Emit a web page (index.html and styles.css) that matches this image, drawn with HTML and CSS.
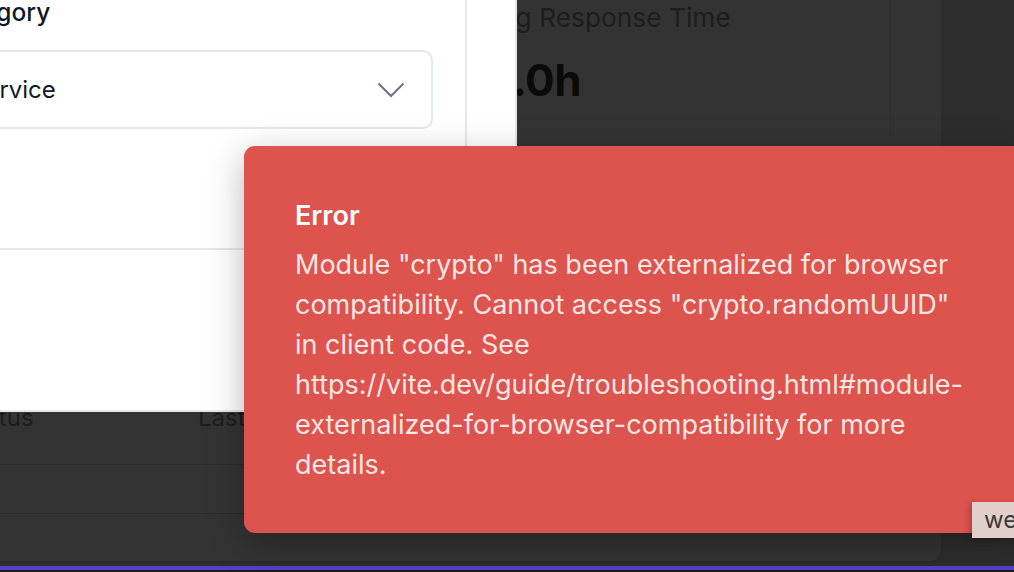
FILE: index.html
```html
<!DOCTYPE html>
<html lang="en">
<head>
<meta charset="utf-8">
<title>Tickets</title>
<link rel="stylesheet" href="styles.css">
</head>
<body>
<div class="page">
  <div class="content">
    <div class="card">
      <div class="stats">
        <div class="stat">
          <div class="stat-label">Avg Response Time</div>
          <div class="stat-value">2.0h</div>
        </div>
        <div class="stat stat-narrow"></div>
      </div>
      <div class="spacer"></div>
      <div class="table">
        <div class="thead">
          <div class="th th-status">Status</div>
          <div class="th">Last Updated</div>
        </div>
        <div class="tr"></div>
        <div class="tr tr-last"></div>
      </div>
    </div>
  </div>
  <div class="accent"></div>
  <div class="footer"></div>
</div>

<div class="modal">
  <div class="modal-body">
    <div class="form">
      <label class="field-label">Category</label>
      <div class="select">
        <span class="select-value">Service</span>
        <svg class="chevron" width="28" height="16" viewBox="0 0 28 16" aria-hidden="true">
          <path d="M1.5 1.5 L14 14 L26.5 1.5" fill="none" stroke="#6b7280" stroke-width="2"/>
        </svg>
      </div>
    </div>
    <div class="gutter"></div>
  </div>
  <div class="modal-footer"></div>
</div>

<div class="toast" role="alert">
  <div class="toast-title">Error</div>
  <div class="toast-text">Module "crypto" has been externalized for browser compatibility. Cannot access "crypto.randomUUID" in client code. See https://vite.dev/guide/troubleshooting.html#module-externalized-for-browser-compatibility for more details.</div>
</div>

<div class="hint">we</div>
</body>
</html>
```

FILE: styles.css
```css
html, body {
  margin: 0;
  padding: 0;
}

body {
  width: 1014px;
  height: 572px;
  overflow: hidden;
  background: #333333;
  font-family: Inter, "Noto Sans", "Liberation Sans", sans-serif;
  position: relative;
}

/* ---------- dimmed dashboard behind ---------- */
.page {
  display: flex;
  flex-direction: column;
  height: 572px;
}

.content {
  flex: 1;
  display: flex;
  padding-bottom: 4px;
  background: #2d2d2d;
  min-height: 0;
}

.card {
  width: 942px;
  background: #333333;
  border-right: 1px solid #2a2a2a;
  border-bottom: 1px solid #2a2a2a;
  border-radius: 0 0 12px 0;
  display: flex;
  flex-direction: column;
  box-sizing: border-box;
}

.stats {
  display: flex;
  height: 140px;
}

.stat {
  flex: 1;
  padding: 0 0 0 485px;
  border-right: 1px solid #2f2f2f;
}

.stat-narrow {
  flex: 0 0 50px;
  padding: 0;
  border-right: none;
}

.stat-label {
  font-size: 26.3px;
  line-height: 36px;
  color: #1d1d20;
}

.stat-value {
  font-size: 44px;
  font-weight: 700;
  line-height: 56px;
  color: #0a0a0a;
  margin-top: 16px;
  letter-spacing: -0.5px;
}

.spacer {
  flex: 1;
}

.table {
  display: flex;
  flex-direction: column;
}

.thead {
  display: flex;
  height: 65px;
  align-items: flex-start;
  padding-top: 3px;
  border-bottom: 1px solid #2c2c2c;
  box-sizing: border-box;
}

.th {
  font-size: 24px;
  line-height: 30px;
  color: #1c1c1f;
}

.th-status {
  width: 236px;
  margin-left: -38px;
}

.tr {
  height: 49px;
  border-bottom: 1px solid #2c2c2c;
  box-sizing: border-box;
}

.tr-last {
  height: 47px;
  border-bottom: none;
}

.accent {
  height: 4px;
  background: #5240c8;
}

.footer {
  height: 2px;
  background: #1b1b22;
}

/* ---------- modal ---------- */
.modal {
  position: absolute;
  left: -80px;
  top: -40px;
  width: 597px;
  height: 452px;
  background: #ffffff;
  border-right: 2px solid #e5e7eb;
  border-bottom: 2px solid #e5e7eb;
  box-sizing: border-box;
  display: flex;
  flex-direction: column;
}

.modal-body {
  display: flex;
  height: 290px;
  border-bottom: 2px solid #e5e7eb;
  box-sizing: border-box;
}

.form {
  flex: 1;
  border-right: 2px solid #e5e7eb;
  padding: 36px 32px 0 22px;
  display: flex;
  flex-direction: column;
}

.gutter {
  width: 48px;
}

.field-label {
  font-size: 24.5px;
  font-weight: 500;
  line-height: 32px;
  color: #111827;
}

.select {
  margin-top: 22px;
  height: 79px;
  border: 2px solid #e2e8f0;
  border-radius: 10px;
  display: flex;
  align-items: center;
  justify-content: space-between;
  padding: 0 26px 0 26px;
  box-sizing: border-box;
}

.select-value {
  font-size: 24px;
  color: #111827;
}

.chevron {
  display: block;
}

/* ---------- error toast ---------- */
.toast {
  position: absolute;
  left: 244px;
  top: 146px;
  width: 780px;
  padding: 50px 50px 48px 51px;
  box-sizing: border-box;
  background: #dd534d;
  border-radius: 11px;
  box-shadow: 0 10px 36px rgba(0, 0, 0, 0.28);
  color: #ffffff;
}

.toast-title {
  font-size: 27px;
  font-weight: 600;
  line-height: 40px;
  margin-bottom: 9px;
}

.toast-text {
  font-size: 27px;
  line-height: 40px;
  color: #fbe6e4;
}

/* ---------- hint tooltip ---------- */
.hint {
  position: absolute;
  left: 972px;
  top: 502px;
  width: 80px;
  height: 36px;
  box-sizing: border-box;
  padding-left: 12px;
  background: #e0cfcc;
  color: #3a3a3a;
  font-size: 24px;
  line-height: 36px;
  box-shadow: -2px 2px 6px rgba(0, 0, 0, 0.25);
}
```
